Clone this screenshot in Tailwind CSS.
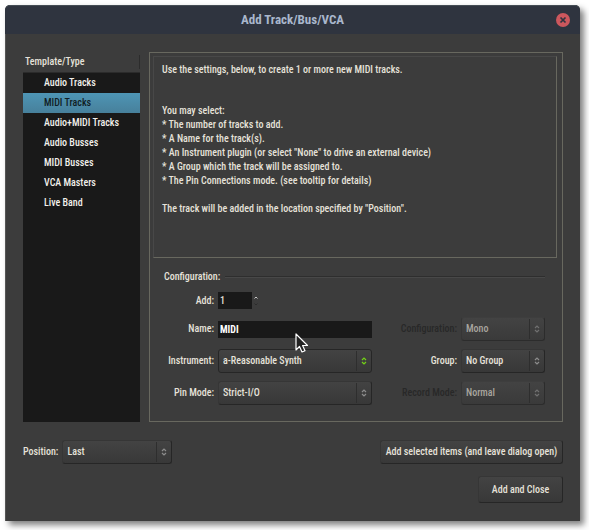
<!DOCTYPE html>
<html lang="en">
<head>
<meta charset="utf-8">
<meta name="viewport" content="width=device-width, initial-scale=1">
<title>Add Track/Bus/VCA</title>
<script src="https://cdn.jsdelivr.net/npm/@tailwindcss/browser@4"></script>
</head>
<body class="flex min-h-screen bg-white pt-[5px] pr-[9px] pb-[9px] pl-[5px] font-['Roboto_Condensed','Lato',sans-serif] text-[10px] leading-[14px] font-medium text-[#e6e2da]">
<svg class="hidden" aria-hidden="true">
  <symbol id="updown" viewBox="0 0 6 8"><path d="M1 3 3 1 5 3M1 5 3 7 5 5" fill="none" stroke="currentColor" stroke-width="1.2"/></symbol>
</svg>
<main class="relative flex flex-1 flex-col rounded-t-[5px] border-l border-[#555555] bg-[#3c3c3c] shadow-[4px_4px_6px_rgba(0,0,0,0.5)]">
  <header class="relative -ml-px flex h-[29px] items-center justify-center rounded-t-[5px] border-t border-[#454d55] bg-[#2f343f]">
    <h1 class="text-[13px] leading-4 font-bold text-[#a9b7cc]">Add Track/Bus/VCA</h1>
    <button type="button" aria-label="Close" class="absolute right-[10px] size-[14px]">
      <svg viewBox="0 0 14 14" class="size-[14px]"><circle cx="7" cy="7" r="7" fill="#cc575d"/><path d="M4.5 4.5l5 5M9.500 4.500l-5 5" stroke="#2f343f" stroke-width="1.7"/></svg>
    </button>
  </header>

  <div class="flex gap-[9px] pt-[18px] pr-[17px] pl-[17px]">
    <nav class="flex w-[117px] flex-col" aria-labelledby="types">
      <div class="flex h-[21px] items-center justify-between border-b border-[#2b2b2b] pl-[2px]">
        <h2 id="types" class="font-medium">Template/Type</h2>
        <span class="h-[14px] w-px bg-[#2c2c2c]"></span>
      </div>
      <ul class="flex-1 bg-[#191919] text-[#f2f0ec]">
        <li><button type="button" class="block h-[20px] w-full pl-[21px] text-left">Audio Tracks</button></li>
        <li><button type="button" aria-current="true" class="block h-[20px] w-full bg-linear-to-b from-[#4e95b5] to-[#47809b] pl-[21px] text-left text-[#111d24]">MIDI Tracks</button></li>
        <li><button type="button" class="block h-[20px] w-full pl-[21px] text-left">Audio+MIDI Tracks</button></li>
        <li><button type="button" class="block h-[20px] w-full pl-[21px] text-left">Audio Busses</button></li>
        <li><button type="button" class="block h-[20px] w-full pl-[21px] text-left">MIDI Busses</button></li>
        <li><button type="button" class="block h-[20px] w-full pl-[21px] text-left">VCA Masters</button></li>
        <li><button type="button" class="block h-[20px] w-full pl-[21px] text-left">Live Band</button></li>
      </ul>
    </nav>

    <section class="min-w-0 flex-1 border border-[#68685f] pt-[3px] pr-[5px] pb-4 pl-[3px]">
      <div class="h-[202px] border border-t-[#484848] border-r-[#68685f] border-b-[#68685f] border-l-[#484848] px-2 pt-[6px]">
        <p>Use the settings, below, to create 1 or more new MIDI tracks.</p>
        <p class="mt-[27px]">You may select:</p>
        <ul>
          <li>* The number of tracks to add.</li>
          <li>* A Name for the track(s).</li>
          <li>* An Instrument plugin (or select "None" to drive an external device)</li>
          <li>* A Group which the track will be assigned to.</li>
          <li>* The Pin Connections mode. (see tooltip for details)</li>
        </ul>
        <p class="mt-[14px]">The track will be added in the location specified by "Position".</p>
      </div>

      <form class="pt-3 pr-3 pl-[11px]">
        <div class="flex items-center gap-[5px]">
          <h2 class="font-medium">Configuration:</h2>
          <span class="h-[2px] flex-1 border-t border-b border-t-[#2e2e2e] border-b-[#484848]"></span>
        </div>
        <div class="mt-2 flex items-center gap-1">
          <label for="count" class="w-[50px] text-right">Add:</label>
          <input id="count" type="text" inputmode="numeric" value="1" class="h-[17px] w-[34px] bg-[#191919] px-[2px]">
          <svg viewBox="0 0 4 10" class="-ml-[2px] h-[10px] w-1" fill="none"><path d="M.5 2.500 2 1 3.500 2.500" stroke="#c8c8c8"/><path d="M.5 7.500 2 9 3.500 7.500" stroke="#2c2c2c"/></svg>
        </div>
        <div class="mt-2 flex justify-between">
          <div class="grid grid-cols-[50px_154px] items-center gap-x-1 gap-y-2">
            <label for="name" class="text-right">Name:</label>
            <div class="flex h-6 items-center"><input id="name" type="text" value="MIDI" class="h-[17px] w-full bg-[#191919] px-[2px] font-bold text-white"></div>
            <label for="instrument" class="text-right whitespace-nowrap">Instrument:</label>
            <div class="relative h-6">
              <select id="instrument" class="h-full w-full appearance-none rounded-[3px] border border-[#262626] bg-linear-to-b from-[#434343] to-[#383838] pl-1"><option>a-Reasonable Synth</option></select>
              <span class="pointer-events-none absolute inset-y-[2px] right-[2px] flex w-[14px] items-center justify-center border-l border-[#2e2e2e] text-[#73d216]"><svg class="h-2 w-[6px]"><use href="#updown"/></svg></span>
            </div>
            <label for="pin" class="text-right whitespace-nowrap">Pin Mode:</label>
            <div class="relative h-6">
              <select id="pin" class="h-full w-full appearance-none rounded-[3px] border border-t-[#363636] border-r-[#262626] border-b-[#262626] border-l-[#363636] bg-linear-to-b from-[#434343] to-[#383838] pl-1"><option>Strict-I/O</option></select>
              <span class="pointer-events-none absolute inset-y-[2px] right-[2px] flex w-[14px] items-center justify-center border-l border-[#2e2e2e] text-[#8c8c8c]"><svg class="h-2 w-[6px]"><use href="#updown"/></svg></span>
            </div>
          </div>
          <div class="grid grid-cols-[auto_84px] items-center gap-x-1 gap-y-2">
            <label for="config" class="text-right whitespace-nowrap text-[#282828]">Configuration:</label>
            <div class="relative h-6">
              <select id="config" disabled class="h-full w-full appearance-none rounded-[3px] border border-t-[#3e3e3e] border-r-[#2c2c2c] border-b-[#2c2c2c] border-l-[#363636] bg-linear-to-b from-[#434343] to-[#3a3a3a] pl-1 text-[#a9a69f] opacity-100"><option>Mono</option></select>
              <span class="pointer-events-none absolute inset-y-[2px] right-[2px] flex w-[14px] items-center justify-center border-l border-[#2e2e2e] text-[#707070]"><svg class="h-2 w-[6px]"><use href="#updown"/></svg></span>
            </div>
            <label for="group" class="text-right">Group:</label>
            <div class="relative h-6">
              <select id="group" class="h-full w-full appearance-none rounded-[3px] border border-t-[#363636] border-r-[#262626] border-b-[#262626] border-l-[#363636] bg-linear-to-b from-[#434343] to-[#383838] pl-1"><option>No Group</option></select>
              <span class="pointer-events-none absolute inset-y-[2px] right-[2px] flex w-[14px] items-center justify-center border-l border-[#2e2e2e] text-[#8c8c8c]"><svg class="h-2 w-[6px]"><use href="#updown"/></svg></span>
            </div>
            <label for="record" class="text-right whitespace-nowrap text-[#282828]">Record Mode:</label>
            <div class="relative h-6">
              <select id="record" disabled class="h-full w-full appearance-none rounded-[3px] border border-t-[#3e3e3e] border-r-[#2c2c2c] border-b-[#2c2c2c] border-l-[#363636] bg-linear-to-b from-[#434343] to-[#3a3a3a] pl-1 text-[#a9a69f] opacity-100"><option>Normal</option></select>
              <span class="pointer-events-none absolute inset-y-[2px] right-[2px] flex w-[14px] items-center justify-center border-l border-[#2e2e2e] text-[#707070]"><svg class="h-2 w-[6px]"><use href="#updown"/></svg></span>
            </div>
          </div>
        </div>
      </form>
    </section>
  </div>

  <footer class="flex flex-col gap-3 pt-[18px] pr-[17px] pb-[17px] pl-[17px]">
    <div class="flex items-center gap-1">
      <label for="position">Position:</label>
      <div class="relative h-6 w-[110px]">
        <select id="position" class="h-full w-full appearance-none rounded-[3px] border border-t-[#363636] border-r-[#262626] border-b-[#262626] border-l-[#363636] bg-linear-to-b from-[#434343] to-[#383838] pl-1"><option>Last</option></select>
        <span class="pointer-events-none absolute inset-y-[2px] right-[2px] flex w-[14px] items-center justify-center border-l border-[#2e2e2e] text-[#8c8c8c]"><svg class="h-2 w-[6px]"><use href="#updown"/></svg></span>
      </div>
      <button type="button" class="ml-auto h-6 w-[183px] rounded-[3px] border border-t-[#363636] border-r-[#262626] border-b-[#262626] border-l-[#363636] bg-linear-to-b from-[#434343] to-[#383838] whitespace-nowrap">Add selected items (and leave dialog open)</button>
    </div>
    <button type="button" class="h-[27px] w-[85px] self-end rounded-[3px] border border-t-[#363636] border-r-[#262626] border-b-[#262626] border-l-[#363636] bg-linear-to-b from-[#434343] to-[#383838]">Add and Close</button>
  </footer>

  <svg class="pointer-events-none absolute top-[328px] left-[289px] h-[20px] w-[14px]" viewBox="0 0 14 20" aria-hidden="true"><path d="M1 1V17L4.500 13.500 7 19 10 17.800 7.600 12.500H12.500Z" fill="#222" stroke="#fff" stroke-width="1.200" stroke-linejoin="round"/></svg>
</main>
</body>
</html>
